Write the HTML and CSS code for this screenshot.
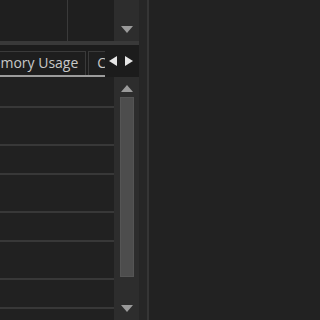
FILE: index.html
```html
<!DOCTYPE html>
<html lang="en">
<head>
  <meta charset="UTF-8" />
  <meta name="viewport" content="width=device-width,initial-scale=1" />
  <title>Diagnostics</title>
  <link rel="stylesheet" href="styles.css">
</head>
<body>
  <div class="pane-left">
    <!-- top list -->
    <div class="top">
      <div class="grid">
        <div class="cell cell-a"></div>
        <div class="cell"></div>
      </div>
      <div class="vscroll">
        <div class="track"></div>
        <span class="arrow down"></span>
      </div>
    </div>
    <div class="sep"></div>
    <!-- tab strip -->
    <div class="tabbar">
      <div class="tabs">
        <div class="tab active">Memory Usage</div>
        <div class="tab">CPU Usage</div>
      </div>
      <div class="tabnav">
        <span class="nav-left"></span>
        <span class="nav-right"></span>
      </div>
    </div>
    <!-- table body -->
    <div class="body">
      <div class="rows">
        <div class="row r1"></div>
        <div class="row tall"></div>
        <div class="row"></div>
        <div class="row tall"></div>
        <div class="row"></div>
        <div class="row tall"></div>
        <div class="row"></div>
        <div class="row last"></div>
      </div>
      <div class="vscroll">
        <span class="arrow up"></span>
        <div class="track"><div class="thumb"></div></div>
        <span class="arrow down"></span>
      </div>
    </div>
  </div>
  <div class="splitter"></div>
  <div class="pane-right"></div>
</body>
</html>
```

FILE: styles.css
```css
html, body { margin: 0; height: 100%; }
body { display: flex; background: #212121; font-family: "Open Sans", "Liberation Sans", sans-serif; overflow: hidden; }

.pane-left { width: 139px; display: flex; flex-direction: column; height: 320px; flex-shrink: 0; }
.top { height: 41px; display: flex; }
.grid { width: 114px; display: flex; background: #1f1f1f; }
.cell { flex: 1; }
.cell-a { flex: 0 0 67px; border-right: 1px solid #3a3a3a; }
.sep { height: 4px; background: #393939; }

.vscroll { width: 25px; background: #2d2d2d; display: flex; flex-direction: column; align-items: center; }
.vscroll .track { flex: 1; width: 100%; display: flex; justify-content: center; }
.thumb { width: 14px; margin-top: 5px; height: 180px; background: #4d4d4d; box-shadow: inset 0 0 0 1px #555; }
.arrow { width: 0; height: 0; border-left: 6px solid transparent; border-right: 6px solid transparent; }
.arrow.down { border-top: 7px solid #9a9a9a; margin: 0 0 8px; }
.arrow.up { border-bottom: 7px solid #9a9a9a; margin: 8px 0 0; }

.tabbar { height: 32px; display: flex; background: #1c1c1c; }
.tabs { width: 105px; overflow: hidden; display: flex; align-items: flex-end; border-bottom: 2px solid #9c9c9c; box-sizing: border-box; }
.tab { flex-shrink: 0; height: 24px; line-height: 22px; padding: 0 7px 0 8px; font-size: 14px; color: #c8c8c8; border: 1px solid #3a3a3a; border-bottom: none; box-sizing: border-box; background: #1e1e1e; }
.tab.active { margin-left: -29px; }
.tab + .tab { margin-left: 2px; }
.tabnav { flex: 1; display: flex; align-items: center; gap: 8px; padding: 0 0 0 4px; }
.nav-left { width: 0; height: 0; border-top: 5px solid transparent; border-bottom: 5px solid transparent; border-right: 8px solid #e6e6e6; }
.nav-right { width: 0; height: 0; border-top: 5px solid transparent; border-bottom: 5px solid transparent; border-left: 8px solid #e6e6e6; }

.body { flex: 1; display: flex; min-height: 0; }
.rows { width: 114px; background: #212121; }
.row { height: 27px; border-bottom: 2px solid #383838; }
.row.r1 { height: 29px; }
.row.tall { height: 36px; }
.row.last { border-bottom: none; }

.splitter { width: 8px; background: #262626; border-right: 2px solid #353535; flex-shrink: 0; }
.pane-right { flex: 1; background: #222222; }
```
